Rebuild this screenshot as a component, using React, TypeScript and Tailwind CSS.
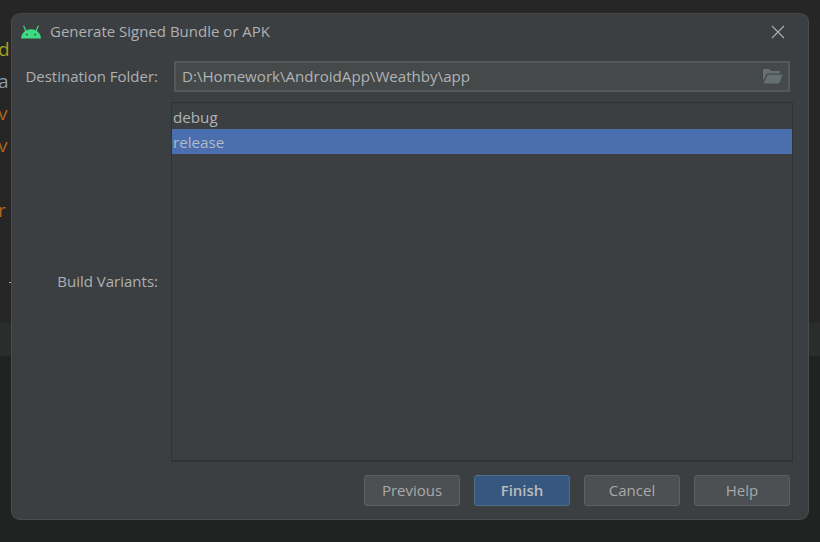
const sans = "font-['Open_Sans','Noto_Sans',sans-serif]";

function Android() {
  return (
    <svg width="20" height="14" viewBox="0 0 20 14" className="shrink-0">
      <path d="M0 13.5 C0.4 8.2 4.2 4.2 10 4.2 C15.8 4.2 19.6 8.2 20 13.5 Z" fill="#3ddc84" />
      <path d="M4.8 5.8 L2.8 1.2 M15.2 5.8 L17.2 1.2" stroke="#3ddc84" strokeWidth="1.2" strokeLinecap="round" />
      <circle cx="5.8" cy="9.6" r="0.9" fill="#3c3f41" />
      <circle cx="14.2" cy="9.6" r="0.9" fill="#3c3f41" />
    </svg>
  );
}

function Folder() {
  return (
    <svg width="20" height="15" viewBox="0 0 20 15">
      <path d="M0 1 C0 .4 .4 0 1 0 H6 L8 2 H16 C16.6 2 17 2.4 17 3 V4.6 H4 L0 12 Z" fill="#667072" />
      <path d="M4.6 5.8 H19.6 L16 14.6 H0.6 Z" fill="#667072" />
    </svg>
  );
}

function Btn({ children, primary }: { children: string; primary?: boolean }) {
  return (
    <div
      className={
        primary
          ? "w-[96px] h-[31px] flex items-center justify-center rounded-[3px] border border-[#4c708c] bg-[#365880] text-[#bbbbbb] font-semibold text-[15px]"
          : "w-[96px] h-[31px] flex items-center justify-center rounded-[3px] border border-[#5e6060] bg-[#4c5052] text-[#a9a9a9] text-[15px]"
      }
    >
      {children}
    </div>
  );
}

function Peek({ c, children, h }: { c: string; children: string; h: string }) {
  return <div className={`${h} flex items-center -ml-[2px] text-[19px] leading-none ${c}`}>{children}</div>;
}

export default function App() {
  return (
    <div className={`relative w-[820px] h-[542px] overflow-hidden flex flex-col ${sans}`}>
      <div className="h-[323px] bg-[#262626] pt-[33px] flex flex-col">
        <Peek h="h-[32px]" c="text-[#a4a21d]">d</Peek>
        <Peek h="h-[32px]" c="text-[#8f9dae]">a</Peek>
        <Peek h="h-[32px]" c="text-[#b0641c]">v</Peek>
        <Peek h="h-[32px]" c="text-[#b0641c]">v</Peek>
        <div className="h-[33px]" />
        <Peek h="h-[32px]" c="text-[#b0641c]">r</Peek>
        <div className="h-[56px]" />
        <div className="ml-[9px] w-[3px] h-px bg-[#a9a9a9]" />
      </div>
      <div className="h-[33px] bg-[#2b2c2c]" />
      <div className="flex-1 bg-[#212222]" />

      <div className="absolute left-[11px] top-[13px] w-[798px] h-[507px] rounded-[9px] border border-[#4a4c4e] border-t-[#45484a] bg-[#3c3f41] flex flex-col text-[#aeb0b2] text-[15px]">
        <div className="h-[35px] flex items-center pl-[9px] pr-[23px]">
          <Android />
          <span className="ml-[9px] text-[15px]">Generate Signed Bundle or APK</span>
          <svg width="14" height="14" viewBox="0 0 14 14" className="ml-auto">
            <path d="M1 1 L13 13 M13 1 L1 13" stroke="#a9abac" strokeWidth="1.2" />
          </svg>
        </div>
        <div className="flex items-center h-[31px] mt-[12px]">
          <div className="w-[146px] text-right">Destination Folder:</div>
          <div className="ml-[16px] w-[616px] h-[31px] border-2 border-[#56595a] bg-[#45494a] flex items-center pl-[6px] pr-[5px] justify-between">
            <span className="text-[15.1px] text-[#b1b3b4]">D:\Homework\AndroidApp\Weathby\app</span>
            <Folder />
          </div>
        </div>
        <div className="flex mt-[10px]">
          <div className="w-[146px] h-[358px] flex items-center justify-end">Build Variants:</div>
          <div className="ml-[13px] w-[622px] h-[360px] border border-[#323232] border-b-2 pt-px">
            <div className="h-[25px] pl-[1px] pt-[2px] flex items-center text-[#b1b3b4] text-[15.2px]">debug</div>
            <div className="h-[25px] pl-[1px] pt-[2px] flex items-center bg-[#4b6eaf] text-[#b3bac4] text-[15.2px]">release</div>
          </div>
        </div>
        <div className="flex justify-end gap-[14px] pr-[18px] mt-[13px]">
          <Btn>Previous</Btn>
          <Btn primary>Finish</Btn>
          <Btn>Cancel</Btn>
          <Btn>Help</Btn>
        </div>
      </div>
    </div>
  );
}
